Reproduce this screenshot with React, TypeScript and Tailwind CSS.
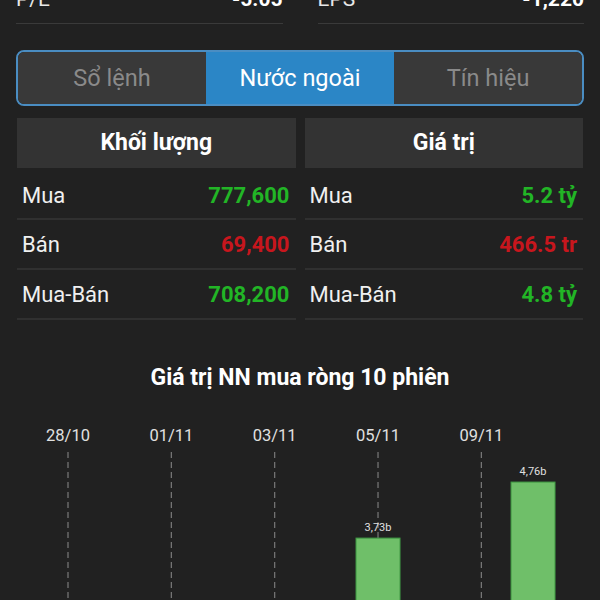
import React from "react";

const green = "text-[#22b526]";
const red = "text-[#c8161d]";

function Stat({ label, value }: { label: string; value: string }) {
  return (
    <div className="flex items-center justify-between border-b border-[#3a3a3a] pb-[10px] mt-[-15px] leading-[28px] text-[21px]">
      <span className="text-[#e8e8e8]">{label}</span>
      <span className="font-bold text-white">{value}</span>
    </div>
  );
}

function Table({ title, rows }: { title: string; rows: { l: string; v: string; c: string }[] }) {
  return (
    <div className="flex flex-col">
      <div className="h-[50px] bg-[#333333] flex items-center justify-center text-[23px] font-bold text-white">
        {title}
      </div>
      {rows.map((r, i) => (
        <div
          key={r.l}
          className={`${i === 0 ? "h-[52px] pt-[4px]" : "h-[50px]"} flex items-center justify-between border-b-2 border-[#303030] pl-[5px] pr-[6px]`}
        >
          <span className="text-[22px] text-[#f0f0f0]">{r.l}</span>
          <span className={`text-[22px] font-bold ${r.c}`}>{r.v}</span>
        </div>
      ))}
    </div>
  );
}

function Chart() {
  const xs = Array.from({ length: 10 }, (_, i) => 68 + i * 51.67);
  const labels = ["28/10", "01/11", "03/11", "05/11", "09/11"];
  const base = 741;
  const scale = 54.4;
  const bars: { i: number; v: number; t: string }[] = [
    { i: 6, v: 3.73, t: "3,73b" },
    { i: 9, v: 4.76, t: "4,76b" },
  ];
  return (
    <svg width="600" height="200" viewBox="0 410 600 200" className="block">
      {labels.map((l, k) => {
        const x = xs[k * 2];
        return (
          <g key={l}>
            <text
              x={x}
              y={441}
              textAnchor="middle"
              fill="#e0e0e0"
              fontSize="16.5"
              fontFamily="Roboto, sans-serif"
            >
              {l}
            </text>
            <line x1={x} x2={x} y1={452} y2={610} stroke="#7a7a7a" strokeWidth="1.2" strokeDasharray="6 4" />
          </g>
        );
      })}
      {bars.map((b) => {
        const x = xs[b.i];
        const h = b.v * scale;
        const top = base - h;
        return (
          <g key={b.t}>
            <rect x={x - 22} y={top} width={44} height={h} fill="#6fbf69" stroke="#3f9a43" strokeWidth="1" />
            <text
              x={x}
              y={top - 7}
              textAnchor="middle"
              fill="#e0e0e0"
              fontSize="11"
              fontFamily="Roboto, sans-serif"
            >
              {b.t}
            </text>
          </g>
        );
      })}
    </svg>
  );
}

export default function App() {
  return (
    <div className="w-[600px] h-[600px] overflow-hidden bg-[#212121] font-['Roboto',sans-serif]">
      <div className="grid grid-cols-2 gap-[35px] px-[16px]">
        <Stat label="P/E" value="-5.05" />
        <Stat label="EPS" value="-1,220" />
      </div>

      <div className="mx-[16px] mt-[26px] h-[56px] rounded-[8px] border-2 border-[#4a8dc2] flex overflow-hidden">
        <div className="flex-1 bg-[#393939] flex items-center justify-center pt-[2px] text-[23.5px] text-[#8a8a8a]">Sổ lệnh</div>
        <div className="flex-1 bg-[#2b86c6] flex items-center justify-center pt-[2px] text-[23.5px] text-white">Nước ngoài</div>
        <div className="flex-1 bg-[#393939] flex items-center justify-center pt-[2px] text-[23.5px] text-[#8a8a8a]">Tín hiệu</div>
      </div>

      <div className="grid grid-cols-2 gap-[9px] px-[17px] mt-[12px]">
        <Table
          title="Khối lượng"
          rows={[
            { l: "Mua", v: "777,600", c: green },
            { l: "Bán", v: "69,400", c: red },
            { l: "Mua-Bán", v: "708,200", c: green },
          ]}
        />
        <Table
          title="Giá trị"
          rows={[
            { l: "Mua", v: "5.2 tỷ", c: green },
            { l: "Bán", v: "466.5 tr", c: red },
            { l: "Mua-Bán", v: "4.8 tỷ", c: green },
          ]}
        />
      </div>

      <div className="mt-[44px] text-center text-[23px] font-bold text-white leading-[28px]">
        Giá trị NN mua ròng 10 phiên
      </div>
      <div className="mt-[18px]">
        <Chart />
      </div>
    </div>
  );
}
